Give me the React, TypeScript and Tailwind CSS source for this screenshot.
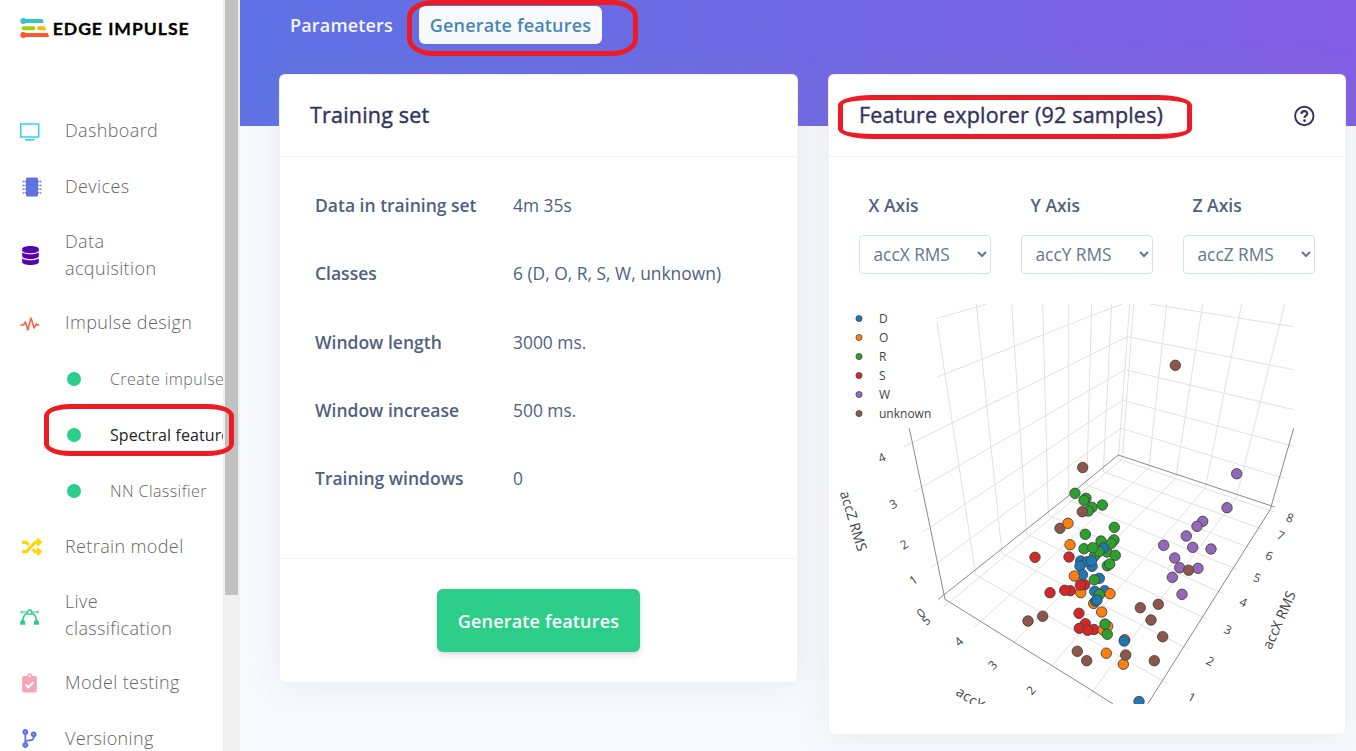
import React from "react";
import { FaDatabase, FaRandom, FaCodeBranch } from "react-icons/fa";

const C = { D: "#1f77b4", O: "#ff7f0e", R: "#2ca02c", S: "#d62728", W: "#9467bd", U: "#8c564b" };
type Key = keyof typeof C;

const points: [Key, number, number][] = [
  ["U", 1175.3, 365.3], ["U", 1082.7, 467.5], ["W", 1236.7, 473.7], ["W", 1227, 507.7],
  ["R", 1075, 493.3], ["R", 1086, 498.3], ["R", 1084, 500.3], ["R", 1102.3, 505], ["R", 1092, 507.3], ["R", 1088.3, 511],
  ["U", 1082.3, 511.7], ["U", 1060, 528.3], ["O", 1068, 523.3],
  ["W", 1202.7, 521.3], ["W", 1197, 526.3], ["W", 1186.3, 536], ["W", 1163.7, 545.3], ["W", 1192.7, 547.3],
  ["W", 1211, 549], ["W", 1174.7, 558], ["W", 1179.7, 567.7], ["W", 1198, 568.3], ["U", 1188.7, 570.2],
  ["W", 1172.3, 577.3], ["W", 1182, 594.3],
  ["R", 1114.3, 527.3], ["R", 1085.3, 534.3], ["O", 1070, 544.7], ["R", 1101, 541], ["R", 1107, 552],
  ["R", 1094.5, 556], ["R", 1084, 548.7], ["R", 1114, 540], ["R", 1111.3, 543.3],
  ["D", 1103.7, 548], ["R", 1099, 551.5], ["R", 1092.7, 547.7], ["R", 1115.3, 555.3], ["R", 1107.3, 565.7], ["R", 1109.7, 564],
  ["S", 1069, 557], ["S", 1035, 557.3],
  ["D", 1080.7, 561], ["D", 1092, 566.3], ["D", 1087.5, 561.7], ["D", 1091.5, 560.7], ["D", 1080, 566],
  ["D", 1082.5, 574.7], ["O", 1074.3, 576], ["D", 1099.3, 578.3], ["R", 1094.3, 579.7],
  ["O", 1080.7, 592.7], ["S", 1084.7, 584.7], ["S", 1080.3, 585],
  ["S", 1050, 592.7], ["S", 1070.3, 590.7], ["S", 1064.7, 590.3],
  ["D", 1094.7, 591.3], ["D", 1104.7, 590.7], ["R", 1099.5, 594.5], ["O", 1110, 593.7],
  ["O", 1093.7, 603.5], ["D", 1095.7, 601.3], ["D", 1097, 600], ["O", 1101.7, 612],
  ["S", 1079, 613.3], ["S", 1085.3, 623.7], ["S", 1079.3, 628.3], ["S", 1094, 629.5], ["S", 1087.7, 630.3],
  ["O", 1103, 630], ["O", 1107.7, 626.3], ["R", 1105, 624], ["R", 1107.3, 634.3],
  ["U", 1042.7, 616.2], ["U", 1028, 621], ["U", 1077.3, 651.3], ["U", 1086.7, 660.7],
  ["O", 1106.3, 653.2], ["O", 1124.7, 639.7], ["D", 1124.2, 641], ["O", 1123.3, 664.2], ["U", 1125.7, 655],
  ["U", 1140.3, 607.7], ["U", 1158.3, 604.3], ["U", 1151, 620], ["U", 1162.7, 636.7], ["U", 1154.3, 660.7],
  ["D", 1139, 701.5],
];

const grid = [
  "M937.3 318.3L987.3 304", "M937.3 377L1090 316.2L1122 304",
  "M904 446.7L1090 355.2L1127.3 336.7L1293.7 369.7",
  "M914 491.7L1090 390L1125 369.7L1293.7 409.7",
  "M923.3 531.7L1090 421.7L1122.7 400.3L1293.7 446.3",
  "M931 567.7L1090 450.7L1121 428.3L1284 478.3",
  "M1150 304L1293.7 326.7",
  "M937 322L975.7 575L1168 683.7",
  "M976.3 304L1002 553.3L1188.7 649.3",
  "M1011.7 304L1026.7 534L1207 619.3",
  "M1042.7 304L1048.3 515L1223.3 593.7",
  "M1068.3 304L1068.3 500L1237.7 569.7",
  "M1091.7 304L1086.7 485L1250.7 548.3",
  "M1111.7 304L1103.3 471.7L1262.7 529.3",
  "M1129.7 304L1118.3 459L1274 512",
  "M1133.7 304L1122.3 459L943.3 607.3",
  "M1166.7 304L1148.7 468.3L974.3 627.3",
  "M1202.7 304L1175.7 478.3L1008.3 648.3",
  "M1241.7 304L1205.3 488.3L1046 672.3",
  "M1284.7 304L1236.3 497.7L1087.3 698.7",
];

const axes = [
  "M938.3 599.3L1063.3 500L1118.3 455L1274.7 507",
  "M1293.7 428.3L1270.3 509.3L1147.7 704",
  "M909.3 428.3L929.7 525L945 599.3L1090 689.3L1113 704",
];

const ticks: [string, number, number, number][] = [
  ["8", 1290, 518, 20], ["7", 1280.7, 535.7, 22], ["6", 1269.3, 556, 22], ["5", 1257, 578, 22],
  ["4", 1243.3, 602.3, 24], ["3", 1228, 630, 25], ["2", 1210.3, 661.3, 27], ["1", 1191.7, 697.3, 27],
  ["4", 881.8, 457.7, -25], ["3", 893.3, 504.3, -28], ["2", 904, 544.7, -31], ["1", 913.3, 580, -35],
  ["0", 921, 613, -40], ["5", 926.3, 620.6, -40], ["4", 958.8, 641.7, -43], ["3", 992.7, 665, -45], ["2", 1031, 690.3, -48],
];

const legend: [Key, string][] = [["D", "D"], ["O", "O"], ["R", "R"], ["S", "S"], ["W", "W"], ["U", "unknown"]];

function Plot() {
  return (
    <svg viewBox="829 304 516 400" className="block h-[400px] w-[516px] shrink-0 overflow-hidden" fontFamily="Open Sans, sans-serif">
      <g fill="none" stroke="#e1e1e1" strokeWidth="1">
        {grid.map((d) => <path key={d} d={d} />)}
      </g>
      <g fill="none" stroke="#8a8a8a" strokeWidth="1">
        {axes.map((d) => <path key={d} d={d} />)}
      </g>
      {points.map(([k, x, y], i) => (
        <circle key={i} cx={x} cy={y} r="5.2" fill={C[k]} stroke="#444" strokeWidth="0.9" />
      ))}
      {ticks.map(([t, x, y, r], i) => (
        <text key={i} transform={`translate(${x} ${y}) rotate(${r})`} textAnchor="middle" y="4.2" fontSize="12" fill="#444">{t}</text>
      ))}
      <g fill="#444" fontSize="14">
        <text transform="translate(1279 620) rotate(-66)" textAnchor="middle" y="5" textLength="62">accX RMS</text>
        <text transform="translate(853.5 521) rotate(73)" textAnchor="middle" y="5" textLength="62">accZ RMS</text>
        <text transform="translate(956 692.5) rotate(33)" y="2" textLength="64">accY RMS</text>
      </g>
      {legend.map(([k, label], i) => (
        <g key={k}>
          <circle cx="859" cy={318.5 + i * 19} r="3.1" fill={C[k]} stroke="#444" strokeWidth="0.7" />
          <text x="879" y={323 + i * 19} fontSize="12" fill="#444">{label}</text>
        </g>
      ))}
    </svg>
  );
}

const Monitor = () => (
  <svg viewBox="0 0 20 20" className="h-5 w-5" fill="none" stroke="#11cdef">
    <rect x="0.75" y="3" width="18" height="13" strokeWidth="1.3" />
    <path d="M5 18.9h9.5" strokeWidth="1.4" />
  </svg>
);
const Chip = () => (
  <svg viewBox="0 0 20 20" className="ml-[1.5px] h-5 w-5" fill="#5e72e4">
    <rect x="4" y="0.5" width="12" height="19" rx="1.6" />
    <path d="M0.5 4.5h19M0.5 8.3h19M0.5 12.1h19M0.5 15.9h19" stroke="#5e72e4" strokeWidth="1.3" strokeDasharray="1.6 0.5 14.8 0.5 1.6" />
  </svg>
);
const Pulse = () => (
  <svg viewBox="0 0 20 16" className="mt-[2px] h-4 w-5" fill="none" stroke="#fb6340" strokeWidth="1.6" strokeLinejoin="round">
    <path d="M0.3 9H3.6L5.4 6L7.8 14L11 2L14.2 12L16.2 8L17 9H19.4" />
  </svg>
);
const Bezier = () => (
  <svg viewBox="0 0 20 16" className="mt-[2px] h-4 w-5" fill="none" stroke="#2dce89" strokeWidth="1.3">
    <circle cx="9.6" cy="3.2" r="2.2" />
    <path d="M2 3H7.4M11.8 3H17.5" strokeWidth="1.1" />
    <circle cx="1.6" cy="3" r="1" strokeWidth="0.8" /><circle cx="17.8" cy="3" r="1" strokeWidth="0.8" />
    <path d="M7.2 4.2C4.4 5.4 3 8 2.8 11.5M12 4.2C14.8 5.4 16.2 8 16.4 11.5" strokeWidth="1.6" />
    <path d="M0.2 15.8v-3.4l1.4-1.5h2.2l1.4 1.5v3.4zM14 15.8v-3.4l1.4-1.5h2.2l1.4 1.5v3.4z" fill="#2dce89" stroke="none" />
  </svg>
);
const Clipboard = () => (
  <svg viewBox="0 0 16 20" className="ml-[1.5px] h-5 w-4" fill="#f5a5b8">
    <path d="M2 3H5.2V2.8a2.5 2.5 0 0 1 5 0V3H13a1.8 1.8 0 0 1 1.8 1.8V17.7a1.8 1.8 0 0 1-1.8 1.8H2A1.8 1.8 0 0 1 .2 17.7V4.8A1.8 1.8 0 0 1 2 3z" />
    <circle cx="7.7" cy="2.9" r="1" fill="#fff" />
    <path d="M3.7 11.8L6.3 14.4L11.4 9.2" fill="none" stroke="#fff" strokeWidth="2" />
  </svg>
);

function Item({ icon, label, two }: { icon: React.ReactNode; label: React.ReactNode; two?: boolean }) {
  return (
    <div className={two ? "flex h-[80.8px] shrink-0 items-center pl-5 pt-[1.4px]" : "flex h-[55.7px] shrink-0 items-center pl-5"}>
      <div className="flex w-[45px] shrink-0 pt-px">{icon}</div>
      <div className="whitespace-nowrap text-[18px] font-light leading-[27px] tracking-[0.38px] text-[#666]">{label}</div>
    </div>
  );
}

function Sub({ label, active }: { label: string; active?: boolean }) {
  return (
    <div className="flex h-[56px] shrink-0 items-center overflow-hidden pl-[67px] pt-[1.6px]">
      <span className="mr-[29px] h-[14px] w-[14px] shrink-0 rounded-full bg-[#2dce89]" />
      <span className={active ? "whitespace-nowrap text-[16px] tracking-[0.1px] text-[#222]" : "whitespace-nowrap text-[16px] font-light tracking-[0.43px] text-[#666]"}>{label}</span>
    </div>
  );
}

function Sidebar() {
  return (
    <aside className="flex h-full w-[240px] shrink-0">
      <nav className="flex w-[223px] flex-col overflow-hidden bg-white">
        <svg viewBox="0 0 223 56" className="h-[56px] w-[223px] shrink-0">
          <path d="M23.5 19H42.5L43.7 23H23.5z" fill="#3bc1d0" /><circle cx="23.3" cy="21" r="3" fill="#3bc1d0" />
          <path d="M23.5 33H48L49 37.1H23.5z" fill="#ff572d" /><circle cx="23.3" cy="35" r="3" fill="#ff572d" />
          <rect x="21.6" y="26.2" width="13.8" height="4" rx="2" fill="#9fcf14" />
          <path d="M39 26.2H44.8L46.2 30.2H39a2 2 0 0 1 0-4z" fill="#ffb813" />
          <text x="52.7" y="34.5" fontFamily="Lato, sans-serif" fontWeight="700" fontSize="17.6" textLength="136" fill="#000" stroke="#000" strokeWidth="0.3">EDGE IMPULSE</text>
        </svg>
        <div className="h-[46.5px] shrink-0" />
        <Item icon={<Monitor />} label="Dashboard" />
        <Item icon={<Chip />} label="Devices" />
        <Item two icon={<FaDatabase className="ml-[2px] h-[19px] w-[17px] text-[#5603ad]" />} label={<>Data<br />acquisition</>} />
        <Item icon={<Pulse />} label="Impulse design" />
        <Sub label="Create impulse" />
        <Sub label="Spectral features" active />
        <Sub label="NN Classifier" />
        <Item icon={<FaRandom className="ml-[1.5px] h-[20px] w-[20px] text-[#ffd600]" />} label="Retrain model" />
        <Item two icon={<Bezier />} label={<>Live<br />classification</>} />
        <Item icon={<Clipboard />} label="Model testing" />
        <Item icon={<FaCodeBranch className="ml-px h-[19px] w-[17px] text-[#5e72e4]" />} label="Versioning" />
      </nav>
      <div className="w-[17px] bg-[#f0f0f0] px-[2px]">
        <div className="h-[595px] bg-[#c1c1c1]" />
      </div>
    </aside>
  );
}

const rows: [string, string][] = [
  ["Data in training set", "4m 35s"],
  ["Classes", "6 (D, O, R, S, W, unknown)"],
  ["Window length", "3000 ms."],
  ["Window increase", "500 ms."],
  ["Training windows", "0"],
];

function TrainingCard() {
  return (
    <section className="flex h-[609px] w-[519px] flex-col rounded-md border border-black/5 bg-white shadow-[0_0_32px_rgba(136,152,170,0.15)]">
      <h2 className="flex h-[82px] shrink-0 items-center border-b border-black/5 px-[30px] text-[21.5px] tracking-[0.2px] text-[#32325d] [-webkit-text-stroke:0.4px_#32325d]">Training set</h2>
      <dl className="flex h-[401px] shrink-0 flex-col pt-[14px] text-[17.5px] text-[#525f7f]">
        {rows.map(([a, b]) => (
          <div key={a} className="flex h-[68.3px] items-center pl-[35px]">
            <dt className="w-[198px] font-semibold">{a}</dt>
            <dd className="text-[17.4px]">{b}</dd>
          </div>
        ))}
      </dl>
      <footer className="flex grow items-center justify-center border-t border-black/5">
        <button className="h-[63px] w-[203px] rounded-md bg-[#2dce89] pt-px text-[18px] font-semibold tracking-[0.17px] text-white shadow-[0_4px_6px_rgba(50,50,93,0.11),0_1px_3px_rgba(0,0,0,0.08)]">Generate features</button>
      </footer>
    </section>
  );
}

function ExplorerCard() {
  return (
    <section className="flex h-[661px] w-[518px] flex-col rounded-md border border-black/5 bg-white shadow-[0_0_32px_rgba(136,152,170,0.15)]">
      <header className="flex h-[82px] shrink-0 items-center justify-between border-b border-black/5 px-[30px]">
        <h2 className="text-[21.5px] tracking-[0.2px] text-[#32325d] [-webkit-text-stroke:0.4px_#32325d]">Feature explorer (92 samples)</h2>
        <svg viewBox="0 0 22 22" className="h-[22px] w-[22px]" fill="none" stroke="#32325d">
          <circle cx="11.3" cy="11" r="9.2" strokeWidth="1.9" />
          <path d="M8.3 8.8C8.6 6.9 9.8 6.1 11.3 6.1C13 6.1 14.3 7.1 14.3 8.6C14.3 10.8 11.5 10.6 11.5 12.8" strokeWidth="2.2" />
          <circle cx="11.5" cy="15.6" r="0.7" strokeWidth="1.4" />
        </svg>
      </header>
      <div className="flex h-[147px] shrink-0 gap-[30px] px-[30px] pt-[30px]">
        {["X", "Y", "Z"].map((a) => (
          <label key={a} className="flex w-[132px] flex-col text-[17.5px] text-[#525f7f]">
            <span className="flex h-[48px] items-center pb-[12px] pl-[9.5px] font-semibold">{a} Axis</span>
            <select className="h-[39px] rounded-[4px] border border-[#cce5f3] bg-white pl-[9.5px] pr-[2px] text-[17.3px] text-[#6a748f]">
              <option>{`acc${a} RMS`}</option>
            </select>
          </label>
        ))}
      </div>
      <Plot />
    </section>
  );
}

export default function App() {
  return (
    <div className="relative flex h-[751px] w-[1356px] overflow-hidden bg-[#f8f9fe] font-['Open_Sans',sans-serif]">
      <Sidebar />
      <main className="h-full grow bg-[linear-gradient(87deg,#5e72e4_0%,#825ee4_100%)] bg-[length:100%_126px] bg-no-repeat">
        <div className="flex h-[74px] items-start pl-[39px] pt-[6px] text-[18px] font-semibold tracking-[0.17px]">
          <span className="flex h-[38px] w-[125px] items-center pl-[11px] text-[#f4f6ff]">Parameters</span>
          <span className="ml-[15px] flex h-[38px] w-[183px] items-center justify-center rounded-md bg-[#f7fafc] text-[#4887b3]">Generate features</span>
        </div>
        <div className="flex items-start gap-[30px] pl-[39px]">
          <TrainingCard />
          <ExplorerCard />
        </div>
      </main>
      <div className="absolute left-[407px] top-0 h-[56px] w-[231px] rounded-[26px/17px] border-[5px] border-[#ed1c24]" />
      <div className="absolute left-[838px] top-[95px] h-[44px] w-[354px] rounded-[34px/10px] border-[5px] border-[#ed1c24]" />
      <div className="absolute left-[44px] top-[404px] h-[52px] w-[190px] rounded-[26px/12px] border-[5px] border-[#ed1c24]" />
    </div>
  );
}
